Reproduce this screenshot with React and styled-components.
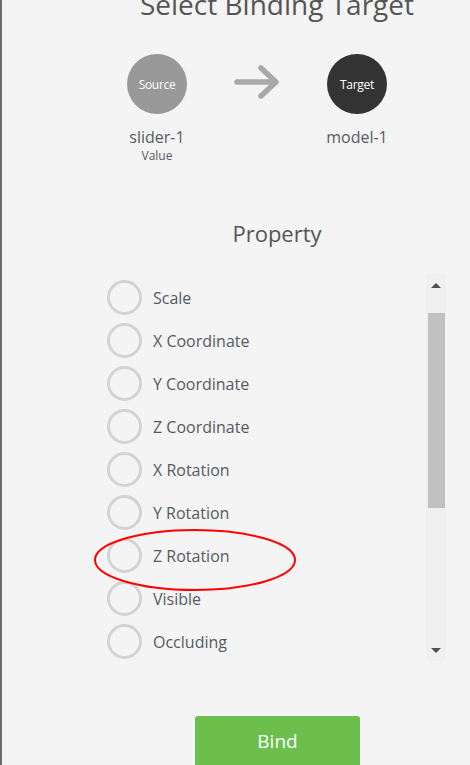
import React from 'react'
import styled, { createGlobalStyle } from 'styled-components'

const GlobalStyle = createGlobalStyle`
  html, body {
    margin: 0;
    padding: 0;
    background: #f4f4f4;
  }
  body {
    font-family: "Open Sans", "Noto Sans", sans-serif;
  }
`

const properties = [
  'Scale',
  'X Coordinate',
  'Y Coordinate',
  'Z Coordinate',
  'X Rotation',
  'Y Rotation',
  'Z Rotation',
  'Visible',
  'Occluding',
  'Opacity',
  'Color',
  'X Scale',
  'Y Scale',
  'Z Scale',
  'Text',
]

const Panel = styled.div`
  position: relative;
  width: 468px;
  height: 765px;
  overflow: hidden;
  border-left: 2px solid #6b6b6b;
  background: #f4f4f4;
  color: #555a63;
  display: flow-root;

  &::before {
    content: '';
    position: absolute;
    left: -2px;
    top: 27px;
    width: 1px;
    height: 28px;
    background: #4a4a4a;
  }
`

const Title = styled.h1`
  margin: -15px 0 0 108px;
  width: 334px;
  text-align: center;
  font-size: 28px;
  font-weight: 400;
  line-height: 38px;
  color: #555;
  white-space: nowrap;
`

const Nodes = styled.div`
  display: flex;
  align-items: flex-start;
  margin: 31px 0 0 108px;
`

const Node = styled.div`
  width: 94px;
  display: flex;
  flex-direction: column;
  align-items: center;
`

const Circle = styled.div`
  width: 60px;
  height: 60px;
  border-radius: 50%;
  background: ${p => (p.$dark ? '#333333' : '#999999')};
  color: #fff;
  font-size: 12px;
  display: flex;
  align-items: center;
  justify-content: center;
  letter-spacing: -0.3px;
`

const NodeName = styled.div`
  margin-top: 12px;
  font-size: 16px;
  line-height: 22px;
  color: #555a63;
`

const NodeSub = styled.div`
  font-size: 12px;
  line-height: 16px;
  color: #555a63;
`

const Arrow = styled.div`
  width: 106px;
  height: 60px;
  display: flex;
  align-items: center;
  justify-content: center;
`

const Heading = styled.h2`
  margin: 54px 0 0 108px;
  width: 334px;
  text-align: center;
  font-size: 22px;
  font-weight: 400;
  line-height: 30px;
  color: #555;
`

const ListFrame = styled.div`
  display: flex;
  margin: 26px 0 0 96px;
  width: 348px;
  height: 387px;
`

const List = styled.div`
  flex: 1;
  overflow: hidden;
  padding: 6px 0 0 9px;
`

const ScrollBar = styled.div`
  width: 20px;
  display: flex;
  flex-direction: column;
  background: #f0f0f0;
`

const ScrollButton = styled.div`
  height: 20px;
  display: flex;
  align-items: center;
  justify-content: center;

  &::after {
    content: '';
    border-left: 5px solid transparent;
    border-right: 5px solid transparent;
    ${p =>
      p.$down
        ? 'border-top: 5px solid #505050; margin-top: -1px;'
        : 'border-bottom: 5px solid #505050; margin-top: 2px;'}
  }
`

const Track = styled.div`
  flex: 1;
`

const Thumb = styled.div`
  height: 195px;
  margin: 19px 1px 0 2px;
  background: #c1c1c1;
`

const Row = styled.label`
  display: flex;
  align-items: center;
  gap: 11px;
  height: 35px;
  margin-bottom: 8px;
  font-size: 16px;
  color: #555a63;
`

const Radio = styled.span`
  width: 29px;
  height: 29px;
  border-radius: 50%;
  border: 3px solid #d3d3d3;
  flex-shrink: 0;
`

const Actions = styled.div`
  display: flex;
  margin: 55px 0 0 193px;
`

const BindButton = styled.button`
  width: 165px;
  height: 52px;
  border: none;
  border-radius: 3px;
  background: #6dbf4d;
  color: #fff;
  font-family: inherit;
  font-size: 19px;
  padding-bottom: 4px;
`

const Annotation = styled.svg`
  position: absolute;
  left: 90px;
  top: 526px;
  pointer-events: none;
`

export default function App() {
  return (
    <Panel>
      <GlobalStyle />
      <Title>Select Binding Target</Title>
      <Nodes>
        <Node>
          <Circle>Source</Circle>
          <NodeName>slider-1</NodeName>
          <NodeSub>Value</NodeSub>
        </Node>
        <Arrow>
          <svg width="50" height="40" viewBox="0 0 50 40">
            <path
              d="M5 18 H44 M29 4 L44 18 L29 32"
              fill="none"
              stroke="#a9a9a9"
              strokeWidth="5.5"
              strokeLinecap="round"
              strokeLinejoin="round"
            />
          </svg>
        </Arrow>
        <Node>
          <Circle $dark>Target</Circle>
          <NodeName>model-1</NodeName>
        </Node>
      </Nodes>
      <Heading>Property</Heading>
      <ListFrame>
        <List>
          {properties.map(p => (
            <Row key={p}>
              <Radio />
              {p}
            </Row>
          ))}
        </List>
        <ScrollBar>
          <ScrollButton />
          <Track>
            <Thumb />
          </Track>
          <ScrollButton $down />
        </ScrollBar>
      </ListFrame>
      <Actions>
        <BindButton>Bind</BindButton>
      </Actions>
      <Annotation width="206" height="68" viewBox="0 0 206 68">
        <ellipse cx="103" cy="34" rx="100" ry="30" fill="none" stroke="#ff0000" strokeWidth="2" />
      </Annotation>
    </Panel>
  )
}
